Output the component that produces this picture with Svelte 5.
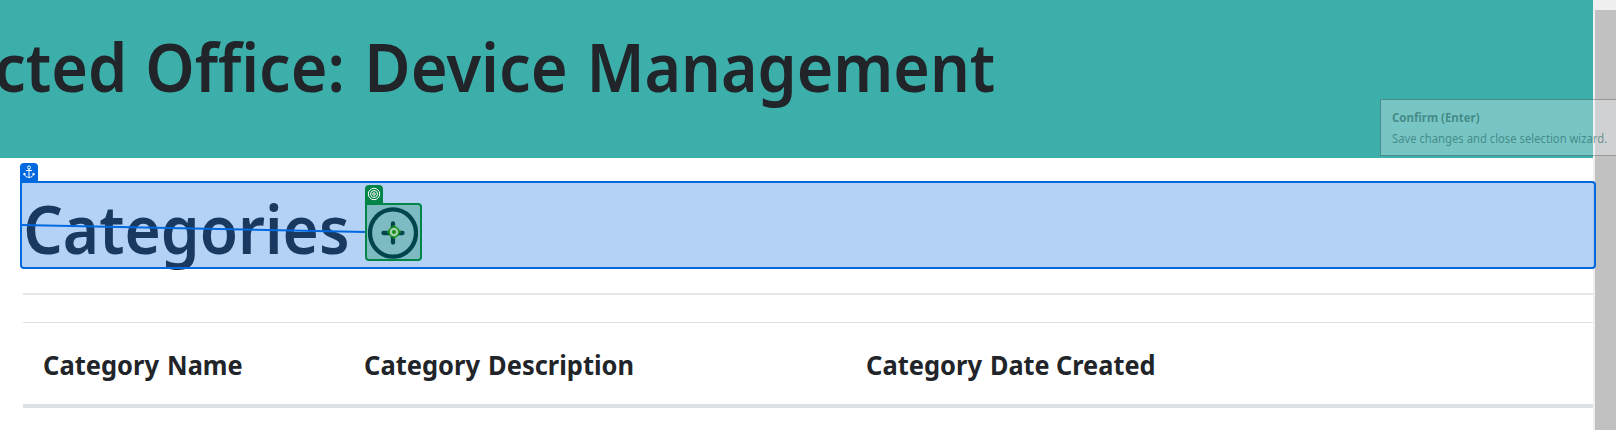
<script>
  const title = [
    { text: 'cted', width: 125.5, gap: 25.5 },
    { text: 'Office:', width: 193.5, gap: 27.5 },
    { text: 'Device', width: 196.5, gap: 26 },
    { text: 'Management', width: 402, gap: 0 }
  ];
  const heading = [{ text: 'Categories', width: 321.5, gap: 0.5 }];
  const columns = [
    [{ text: 'Category', width: 115, gap: 10 }, { text: 'Name', width: 73, gap: 0 }],
    [{ text: 'Category', width: 115, gap: 10 }, { text: 'Description', width: 143, gap: 0 }],
    [{ text: 'Category', width: 115, gap: 10 }, { text: 'Date', width: 57, gap: 8 }, { text: 'Created', width: 97, gap: 0 }]
  ];

  // Condenses a word so its ink fills the requested width.
  function condense(node, width) {
    const ctx = document.createElement('canvas').getContext('2d');
    const style = getComputedStyle(node);
    ctx.font = `${style.fontWeight} ${style.fontSize} ${style.fontFamily}`;
    const m = ctx.measureText(node.textContent);
    const ink = m.actualBoundingBoxLeft + m.actualBoundingBoxRight;
    const scale = width / ink;
    node.style.transformOrigin = '0 0';
    node.style.transform = `scaleX(${scale})`;
    node.style.textIndent = `${m.actualBoundingBoxLeft}px`;
  }
</script>

{#snippet words(list)}
  {#each list as w}<span class="word" style="width:{w.width}px;margin-right:{w.gap}px" use:condense={w.width}>{w.text}</span>{' '}{/each}
{/snippet}

<div class="screen">
  <main>
    <header><h1>{@render words(title)}</h1></header>
    <section class="categories">
      <h1>{@render words(heading)}</h1>
      <svg class="add" width="50" height="52" viewBox="0 0 50 52">
        <ellipse cx="25" cy="26" rx="23" ry="23.7" />
        <path d="M25 16.5V35.500M15.500 26H34.500" />
      </svg>
    </section>
    <div class="rule"></div>
    <div class="table">
      {#each columns as c}<div class="th">{@render words(c)}</div>{/each}
    </div>
  </main>
  <div class="scrollbar"><div class="thumb"></div></div>

  <div class="selection anchor">
    <div class="badge">
      <svg width="12" height="14" viewBox="0 0 12 14"><circle cx="6" cy="2.500" r="1.500" /><path d="M6 4V12.500M3 5.500H9M1.200 8.200C1.400 11 3.500 12.400 6 12.400S10.600 11 10.800 8.200M.5 10L1.200 8.200L3 9.300M11.500 10L10.800 8.200L9 9.300" /></svg>
    </div>
  </div>
  <svg class="link" width="345" height="12"><path d="M0 2L345 9" /></svg>
  <div class="selection target">
    <div class="badge">
      <svg width="14" height="14" viewBox="0 0 14 14"><circle cx="7" cy="7" r="5.700" /><circle cx="7" cy="7" r="3.500" /><circle cx="7" cy="7" r="1.300" /></svg>
    </div>
    <svg class="point" width="16" height="16" viewBox="0 0 16 16"><path class="ticks" d="M8 1V15M1 8H15" /><circle class="ring" cx="8" cy="8" r="5" /><circle class="dot" cx="8" cy="8" r="2" /></svg>
  </div>
  <div class="tooltip"><strong><span class="word" use:condense={87.500}>Confirm (Enter)</span></strong><span class="word" use:condense={215}>Save changes and close selection wizard.</span></div>
</div>

<style>
  :global(body) { margin: 0; overflow: hidden; background: #fff; }
  .screen { position: relative; display: flex; width: 1616px; height: 430px; overflow: hidden; font-family: "Noto Sans", "Open Sans", sans-serif; color: #212529; }
  main { width: 1593px; }
  header { height: 158px; background: #3cafab; overflow: hidden; }
  h1 { display: flex; margin: 0; font-size: 67.300px; font-weight: 560; line-height: 80px; }
  header h1 { margin-left: -3px; padding-top: 26px; }
  .word { display: block; flex: none; white-space: nowrap; }
  .categories { display: flex; height: 111px; padding: 30px 0 0 26px; box-sizing: border-box; }
  .add { margin: 18.500px 0 0 20px; fill: none; stroke: #000f12; stroke-width: 4.300; stroke-linecap: round; }
  .rule { height: 2px; margin: 24px 0 27px 23px; background: #e6e6e6; }
  .table { display: grid; grid-template-columns: 321px 501.500px 1fr; height: 86px; margin-left: 23px; padding-left: 21px; box-sizing: border-box; border-top: 1px solid #dee2e6; border-bottom: 4px solid #dee2e6; }
  .th { display: flex; padding-top: 25px; font-size: 26.200px; font-weight: 700; line-height: 34px; }
  .scrollbar { width: 23px; background: #f0f0f0; padding: 10px 0 0 2px; box-sizing: border-box; }
  .thumb { height: 420px; background: #c1c1c1; }
  .selection { position: absolute; box-sizing: border-box; border-radius: 0 4px 4px 4px; }
  .anchor { left: 20px; top: 181px; width: 1576px; height: 88px; border: 2px solid #0069e0; background: rgba(5, 105, 224, .3); background-clip: padding-box; }
  .target { left: 365px; top: 203px; width: 57px; height: 58px; border: 2px solid #008547; background: rgba(0, 133, 71, .3); }
  .badge { position: absolute; left: -2px; top: -20px; width: 18px; height: 19px; display: flex; justify-content: center; padding-top: 2px; box-sizing: border-box; border-radius: 4px 4px 0 0; }
  .badge svg { fill: none; stroke: #fff; stroke-width: 1; }
  .anchor .badge { background: #0069e0; }
  .target .badge { background: #008547; }
  .link { position: absolute; left: 21px; top: 223px; fill: none; stroke: #0069e0; stroke-width: 2; }
  .point { position: absolute; left: 19px; top: 19px; fill: none; }
  .ticks { stroke: #168f16; stroke-width: 1.500; }
  .ring { fill: #a5cfae; stroke: #168f16; stroke-width: 1.500; }
  .dot { fill: #168f16; }
  .tooltip { position: absolute; left: 1380px; top: 99px; width: 250px; height: 57px; box-sizing: border-box; padding: 7px 0 0 11px; border: 1px solid rgba(90, 90, 90, .4); background: rgba(240, 244, 248, .33); color: rgba(35, 100, 95, .6); background-clip: padding-box; font-size: 12px; line-height: 21px; }
  .tooltip strong { display: block; }
</style>
